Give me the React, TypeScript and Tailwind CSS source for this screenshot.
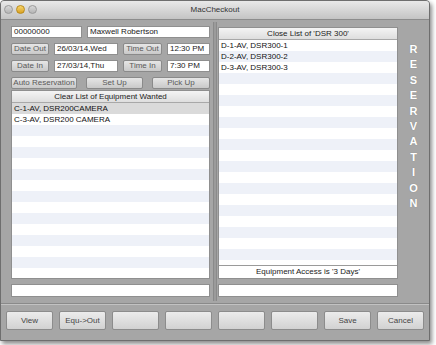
import React from "react";

const font = { fontFamily: '"Liberation Sans", Arial, sans-serif' };

function Field({ value, className = "" }: { value?: string; className?: string }) {
  return (
    <div
      className={`h-[12px] bg-white border border-[#8f8f8f] px-[2px] text-[8px] leading-[10px] text-[#1a1a1a] ${className}`}
    >
      {value}
    </div>
  );
}

function SmallButton({ label, className = "" }: { label: string; className?: string }) {
  return (
    <div
      className={`h-[12px] rounded-[2px] border border-[#8a8a8a] bg-gradient-to-b from-[#e6e6e6] to-[#c9c9c9] text-center text-[8px] leading-[10px] text-[#5a5a5a] ${className}`}
    >
      {label}
    </div>
  );
}

function ListRows({ items, count }: { items: string[]; count: number }) {
  return (
    <div className="flex-1 overflow-hidden bg-white">
      {Array.from({ length: count }).map((_, i) => (
        <div
          key={i}
          className={`h-[11px] px-[2px] text-[8px] leading-[11px] text-[#111] ${
            i % 2 === 1 ? "bg-[#eef1f8]" : "bg-white"
          }`}
        >
          {items[i] ?? ""}
        </div>
      ))}
    </div>
  );
}

const bottomButtons = ["View", "Equ->Out", "", "", "", "", "Save", "Cancel"];
const letters = "RESERVATION".split("");

export default function App() {
  return (
    <div className="w-[436px] h-[345px] bg-white" style={font}>
      <div className="w-[430px] h-[341px] flex flex-col bg-[#a6a6a6] border border-[#6e6e6e] rounded-t-[4px] shadow-[2px_3px_4px_rgba(0,0,0,0.45)] overflow-hidden">
        {/* title bar */}
        <div className="h-[19px] shrink-0 relative flex items-center justify-center bg-gradient-to-b from-[#e9e9e9] to-[#c4c4c4] border-b border-[#8c8c8c]">
          <div className="absolute left-[3px] top-[4px] flex gap-[3px]">
            <span className="w-[9px] h-[9px] rounded-full bg-gradient-to-b from-[#d8d8d8] to-[#b4b4b4] border border-[#9a9a9a]" />
            <span className="w-[9px] h-[9px] rounded-full bg-gradient-to-b from-[#f7d66a] to-[#d9a11c] border border-[#b98a1a]" />
            <span className="w-[9px] h-[9px] rounded-full bg-gradient-to-b from-[#d8d8d8] to-[#b4b4b4] border border-[#9a9a9a]" />
          </div>
          <span className="text-[8px] text-[#333]">MacCheckout</span>
        </div>

        {/* main */}
        <div className="h-[283px] shrink-0 flex">
          {/* left panel */}
          <div className="w-[212px] pl-[10px] pr-[3px] pt-[6px] pb-[6px] flex flex-col">
            <div className="flex gap-[5px]">
              <Field value="00000000" className="w-[71px]" />
              <Field value="Maxwell Robertson" className="flex-1" />
            </div>
            <div className="flex gap-[5px] mt-[5px]">
              <SmallButton label="Date Out" className="w-[38px]" />
              <Field value="26/03/14,Wed" className="w-[64px]" />
              <SmallButton label="Time Out" className="w-[39px]" />
              <Field value="12:30 PM" className="flex-1" />
            </div>
            <div className="flex gap-[5px] mt-[5px]">
              <SmallButton label="Date In" className="w-[38px]" />
              <Field value="27/03/14,Thu" className="w-[64px]" />
              <SmallButton label="Time In" className="w-[39px]" />
              <Field value="7:30 PM" className="flex-1" />
            </div>
            <div className="flex gap-[9px] mt-[5px]">
              <SmallButton label="Auto Reservation" className="w-[66px]" />
              <SmallButton label="Set Up" className="w-[57px]" />
              <SmallButton label="Pick Up" className="flex-1" />
            </div>
            <div className="mt-[1px] flex-1 flex flex-col border border-[#8f8f8f] min-h-0">
              <div className="h-[12px] shrink-0 bg-gradient-to-b from-[#f4f4f4] to-[#dedede] border-b border-[#a8a8a8] text-center text-[8px] leading-[11px] text-[#222]">
                Clear List of Equipment Wanted
              </div>
              <div className="flex-1 overflow-hidden bg-white">
                {Array.from({ length: 16 }).map((_, i) => (
                  <div
                    key={i}
                    className={`h-[11px] px-[2px] text-[8px] leading-[11px] text-[#111] ${
                      i === 0 ? "bg-[#dadada]" : i % 2 === 0 ? "bg-[#eef1f8]" : "bg-white"
                    }`}
                  >
                    {i === 0 ? "C-1-AV, DSR200CAMERA" : i === 1 ? "C-3-AV, DSR200 CAMERA" : ""}
                  </div>
                ))}
              </div>
            </div>
            <Field className="mt-[5px] h-[13px] shrink-0" />
          </div>

          {/* divider */}
          <div className="w-[4px] my-[2px] border-l border-r border-[#8a8a8a] bg-[#9b9b9b]" />

          {/* right panel */}
          <div className="w-[181px] pl-[1px] pt-[7px] pb-[6px] flex flex-col">
            <div className="flex-1 flex flex-col border border-[#8f8f8f] min-h-0">
              <div className="h-[12px] shrink-0 bg-gradient-to-b from-[#f4f4f4] to-[#dedede] border-b border-[#a8a8a8] text-center text-[8px] leading-[11px] text-[#222]">
                Close List of 'DSR 300'
              </div>
              <ListRows items={["D-1-AV, DSR300-1", "D-2-AV, DSR300-2", "D-3-AV, DSR300-3"]} count={21} />
              <div className="h-[13px] shrink-0 bg-white border-t border-[#9a9a9a] text-center text-[8px] leading-[12px] text-[#222]">
                Equipment Access is '3 Days'
              </div>
            </div>
            <Field className="mt-[5px] h-[13px] shrink-0" />
          </div>

          {/* reservation column */}
          <div className="flex-1 flex flex-col items-center pt-[22px]">
            {letters.map((l, i) => (
              <span
                key={i}
                className="h-[15.4px] text-[11px] leading-[15px] font-bold text-white [text-shadow:0_0_1px_rgba(0,0,0,0.25)]"
              >
                {l}
              </span>
            ))}
          </div>
        </div>

        {/* bottom bar */}
        <div className="flex-1 border-t border-[#8a8a8a] shadow-[inset_0_1px_0_#c2c2c2] flex items-start gap-[6px] px-[5px] pt-[7px]">
          {bottomButtons.map((b, i) => (
            <div
              key={i}
              className="flex-1 h-[19px] rounded-[2px] border border-[#8c8c8c] bg-gradient-to-b from-[#ececec] to-[#d2d2d2] text-center text-[8px] leading-[17px] text-[#444]"
            >
              {b}
            </div>
          ))}
        </div>
      </div>
    </div>
  );
}
